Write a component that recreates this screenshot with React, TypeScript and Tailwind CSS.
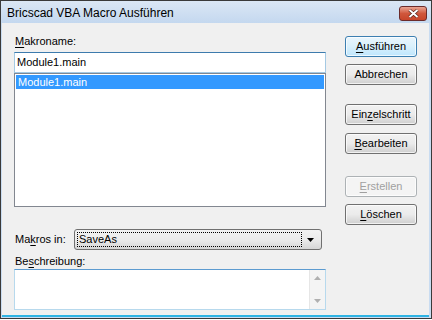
import React from 'react';

const font = { fontFamily: '"Liberation Sans", Arial, sans-serif' };

const Btn: React.FC<{ label: string; k?: number; def?: boolean; disabled?: boolean; className?: string }> = ({ label, k, def, disabled, className }) => {
    const hasKey = k !== undefined && k >= 0;
    const skin = def
        ? 'border-[#3c7fb1] bg-gradient-to-b from-[#eaf6fd] via-[#d9f0fc] to-[#bee6fd]'
        : disabled
            ? 'border-[#adb2b5] bg-[#f4f4f4]'
            : 'border-[#707070] bg-gradient-to-b from-[#f2f2f2] via-[#ebebeb] to-[#cfcfcf]';
    return (
        <div className={`w-[72px] h-[21px] rounded-[3px] border ${skin} flex items-center justify-center shadow-[inset_0_0_0_1px_rgba(255,255,255,0.7)] ${className ?? ''}`}>
            <span className={`text-[11px] leading-none ${disabled ? 'text-[#a0a0a0]' : 'text-black'}`}>
                {hasKey ? (
                    <>
                        {label.slice(0, k)}
                        <span className="underline underline-offset-2">{label.charAt(k!)}</span>
                        {label.slice(k! + 1)}
                    </>
                ) : label}
            </span>
        </div>
    );
};

export default function App() {
    return (
        <div className="w-[432px] h-[320px] bg-white" style={font}>
            <div className="w-[432px] h-[319px] border border-[#3a3a3a] bg-[#c9dcf1] flex flex-col">
                {/* Title bar */}
                <div className="h-[22px] flex items-center justify-between pl-[6px] pr-[4px] bg-gradient-to-b from-[#dbe7f5] to-[#c4d8ef]">
                    <span className="text-[12px] text-black mt-[2px]">Bricscad VBA Macro Ausführen</span>
                    <div className="w-[28px] h-[15px] mt-[3px] rounded-[3px] border border-[#6b2b2b] bg-gradient-to-b from-[#e8a493] via-[#d0573c] to-[#c7452a] flex items-center justify-center">
                        <svg width="11" height="9" viewBox="0 0 11 9">
                            <path d="M1.5 1 L9.5 8 M9.5 1 L1.5 8" stroke="#4a1a12" strokeWidth="3.2" />
                            <path d="M1.5 1 L9.5 8 M9.5 1 L1.5 8" stroke="#ffffff" strokeWidth="2" />
                        </svg>
                    </div>
                </div>

                {/* Client */}
                <div className="flex-1 ml-[1px] mr-[2px] mb-[1px] bg-[#f0f0f0] border-b-2 border-b-[#2fb4e4] flex">
                    {/* Left column */}
                    <div className="ml-[12px] w-[312px] flex flex-col">
                        <div className="mt-[12px] h-[13px] pl-[1px] text-[11px] leading-[13px] text-black">
                            <span className="underline underline-offset-2">M</span>akroname:
                        </div>
                        <div className="mt-[4px] h-[21px] bg-white border border-[#a4c9e3] border-t-[#3d7bad] flex items-center pl-[2px] text-[11px] text-black">
                            Module1.main
                        </div>
                        <div className="h-[134px] bg-white border border-[#828790] p-[1px]">
                            <div className="h-[14px] bg-[#3399ff] text-white text-[11px] leading-[14px] pl-[2px]">Module1.main</div>
                        </div>

                        <div className="mt-[22px] h-[21px] flex items-center">
                            <span className="w-[60px] pl-[1px] text-[11px] text-black">
                                Ma<span className="underline underline-offset-2">k</span>ros in:
                            </span>
                            <div className="w-[248px] h-[21px] rounded-[3px] border border-[#707070] bg-gradient-to-b from-[#f2f2f2] via-[#ebebeb] to-[#d6d6d6] flex items-center p-[2px]">
                                <div className="flex-1 h-[15px] border border-dotted border-black flex items-center pl-[1px] text-[11px] text-black">SaveAs</div>
                                <div className="w-[17px] flex items-center justify-center">
                                    <svg width="7" height="4" viewBox="0 0 7 4"><path d="M0 0 H7 L3.5 4 Z" fill="#000" /></svg>
                                </div>
                            </div>
                        </div>

                        <div className="mt-[5px] h-[13px] pl-[1px] text-[11px] leading-[13px] text-black">
                            Be<span className="underline underline-offset-2">s</span>chreibung:
                        </div>
                        <div className="mt-[1px] h-[41px] bg-white border border-[#b7d9ed] border-t-[#5c9bd0] flex justify-end">
                            <div className="w-[16px] bg-[#f4f4f4] border-l border-[#e6e6e6] flex flex-col items-center justify-between py-[6px]">
                                <svg width="7" height="4" viewBox="0 0 7 4"><path d="M0 4 H7 L3.5 0 Z" fill="#b0b0b0" /></svg>
                                <svg width="7" height="4" viewBox="0 0 7 4"><path d="M0 0 H7 L3.5 4 Z" fill="#b0b0b0" /></svg>
                            </div>
                        </div>
                    </div>

                    {/* Right column buttons */}
                    <div className="ml-[19px] flex flex-col">
                        <Btn label="Ausführen" k={0} def className="mt-[13px]" />
                        <Btn label="Abbrechen" className="mt-[7px]" />
                        <Btn label="Einzelschritt" k={3} className="mt-[19px]" />
                        <Btn label="Bearbeiten" k={0} className="mt-[8px]" />
                        <Btn label="Erstellen" k={0} disabled className="mt-[22px]" />
                        <Btn label="Löschen" k={0} className="mt-[7px]" />
                    </div>
                </div>
            </div>
        </div>
    );
}
